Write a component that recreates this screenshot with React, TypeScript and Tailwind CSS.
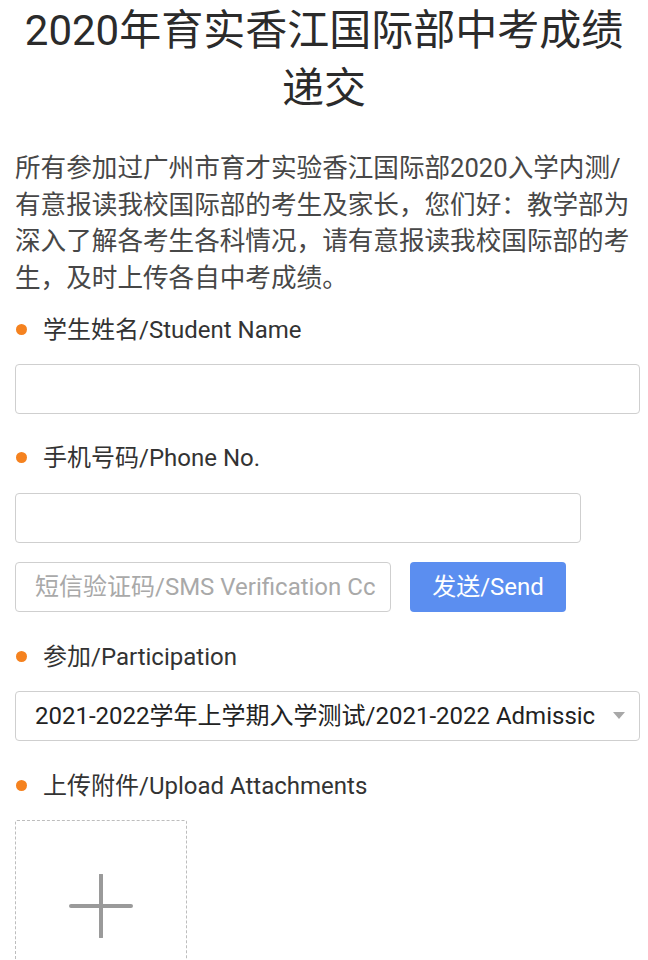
import React from "react";

const font = { fontFamily: "Roboto, 'Noto Sans CJK SC', sans-serif" };

function Label({ children }: { children: React.ReactNode }) {
  return (
    <div className="flex items-center h-[34px]">
      <span className="w-[11px] h-[11px] rounded-full bg-[#f5821f] ml-[16px] shrink-0" />
      <span className="ml-[16px] text-[24px] leading-[34px] text-[#333] whitespace-nowrap">{children}</span>
    </div>
  );
}

export default function App() {
  return (
    <div className="w-[648px] h-[960px] overflow-hidden bg-white" style={font}>
      <h1 className="text-[42px] leading-[58px] text-[#2b2b2b] text-center font-normal pt-[2px] px-[10px]">
        2020年育实香江国际部中考成绩
        <br />
        递交
      </h1>
      <p className="mt-[32px] pl-[15px] pr-[8px] text-[25.6px] leading-[36.7px] text-[#474747]">
        所有参加过广州市育才实验香江国际部2020入学内测/有意报读我校国际部的考生及家长，您们好：教学部为深入了解各考生各科情况，请有意报读我校国际部的考生，及时上传各自中考成绩。
      </p>

      <div className="mt-[16px] pr-[8px]">
        <Label>学生姓名/Student Name</Label>
        <div className="mt-[17px] ml-[15px] h-[50px] border-[1.5px] border-[#cfcfcf] rounded-[4px]" />

        <div className="mt-[27px]">
          <Label>手机号码/Phone No.</Label>
        </div>
        <div className="mt-[18px] ml-[15px] w-[566px] h-[50px] border-[1.5px] border-[#cfcfcf] rounded-[4px]" />

        <div className="mt-[19px] ml-[15px] flex items-center gap-[19px]">
          <div className="w-[376px] h-[50px] border-[1.5px] border-[#cfcfcf] rounded-[4px] pl-[19px] pr-[4px] flex items-center">
            <span className="text-[24px] text-[#a9a9a9] whitespace-nowrap">
              短信验证码/SMS Verification Cc
            </span>
          </div>
          <div className="w-[156px] h-[50px] rounded-[4px] bg-[#5b8ef0] flex items-center justify-center text-white text-[24px]">
            发送/Send
          </div>
        </div>

        <div className="mt-[28px]">
          <Label>参加/Participation</Label>
        </div>
        <div className="mt-[17px] ml-[15px] h-[50px] border-[1.5px] border-[#cfcfcf] rounded-[4px] flex items-center pl-[19px] pr-[14px]">
          <span className="flex-1 text-[24px] text-[#222] whitespace-nowrap">
            2021-2022学年上学期入学测试/2021-2022 Admissic
          </span>
          <svg width="12" height="7" viewBox="0 0 12 7" className="ml-[8px] shrink-0">
            <path d="M0 0 L12 0 L6 7 Z" fill="#a8a8a8" />
          </svg>
        </div>

        <div className="mt-[28px]">
          <Label>上传附件/Upload Attachments</Label>
        </div>
        <div className="mt-[17px] ml-[15px] w-[172px] h-[172px] border border-dashed border-[#bdbdbd] rounded-[2px] flex items-center justify-center">
          <svg width="64" height="64" viewBox="0 0 64 64">
            <path d="M32 1 V63 M2 32 H62" stroke="#9a9a9a" strokeWidth="4" strokeLinecap="round" />
          </svg>
        </div>
      </div>
    </div>
  );
}
